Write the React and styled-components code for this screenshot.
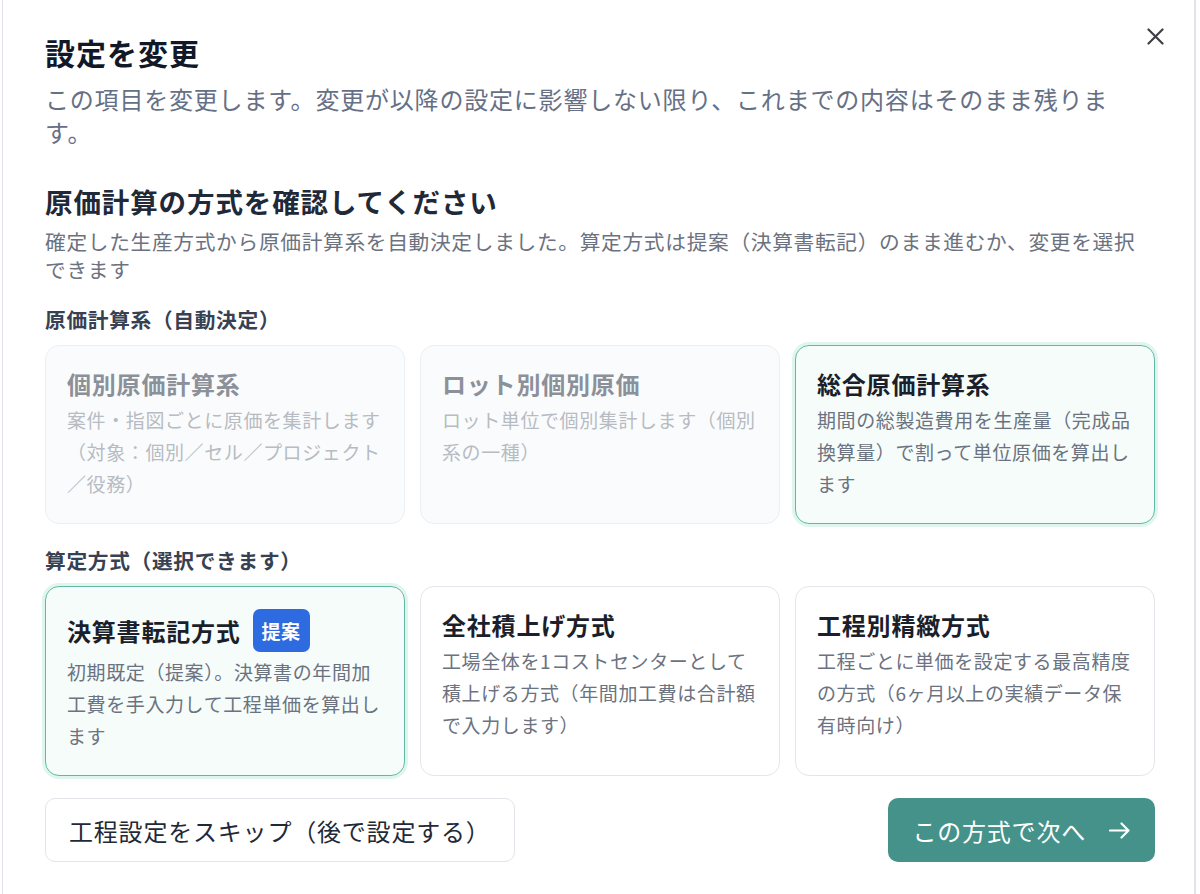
import React from "react";
import styled, { createGlobalStyle, css } from "styled-components";

const GlobalStyle = createGlobalStyle`
  html, body {
    margin: 0;
    background: #ffffff;
  }
  body {
    font-family: "Noto Sans CJK JP", "Noto Sans", "Liberation Sans", sans-serif;
    color: #111827;
  }
  * {
    box-sizing: border-box;
  }
`;

const Panel = styled.div`
  position: relative;
  min-height: 100vh;
  margin: 0 4px 0 2px;
  border-left: 1px solid #e1e3e8;
  border-right: 2px solid #e1e3e8;
  background: #ffffff;
  padding: 33px 39px 40px 42px;
`;

const CloseButton = styled.button`
  position: absolute;
  top: 28px;
  right: 30px;
  width: 17px;
  height: 17px;
  padding: 0;
  border: none;
  background: none;
  cursor: pointer;
  display: flex;
`;

const Title = styled.h1`
  margin: 0;
  font-size: 30px;
  line-height: 39px;
  letter-spacing: 1px;
  font-weight: 700;
  color: #111827;
`;

const Subtitle = styled.p`
  margin: 10px 0 0;
  padding-right: 40px;
  font-size: 24px;
  line-height: 33px;
  letter-spacing: 0.8px;
  color: #667085;
`;

const Heading = styled.h2`
  margin: 35px 0 0;
  font-size: 27.5px;
  line-height: 36px;
  letter-spacing: 0.9px;
  font-weight: 700;
  color: #1f2937;
`;

const Description = styled.p`
  margin: 8px 0 0;
  max-width: 1100px;
  font-size: 20.7px;
  line-height: 28px;
  letter-spacing: 0.7px;
  color: #6b7280;
`;

const Section = styled.section`
  margin-top: ${(p) => p.$top}px;
`;

const Label = styled.div`
  font-size: 20.7px;
  line-height: 28px;
  letter-spacing: 0.7px;
  font-weight: 700;
  color: #374151;
`;

const CardGrid = styled.div`
  margin-top: 12px;
  display: grid;
  grid-template-columns: repeat(3, 1fr);
  gap: 15px;
`;

const cardVariants = {
  disabled: css`
    background: #fafbfd;
    border: 1px solid #eceef2;
  `,
  active: css`
    background: #f5fcfa;
    border: 1px solid #62b9a3;
    box-shadow: 0 0 0 3px rgba(110, 214, 184, 0.22);
  `,
  normal: css`
    background: #ffffff;
    border: 1px solid #e3e5ea;
  `,
};

const Card = styled.div`
  border-radius: 14px;
  padding: 22px 21px 23px;
  ${(p) => cardVariants[p.$variant]}
`;

const CardHead = styled.div`
  display: flex;
  align-items: center;
  gap: 12px;
  min-height: 32px;
  margin-bottom: 4px;
`;

const CardTitle = styled.div`
  font-size: 24px;
  line-height: 32px;
  letter-spacing: 0.8px;
  font-weight: 700;
  color: ${(p) => (p.$muted ? "#8b9099" : "#1a1f2b")};
`;

const CardText = styled.div`
  font-size: 19px;
  line-height: 32px;
  letter-spacing: 0.6px;
  color: ${(p) => (p.$muted ? "#b7bbc2" : "#6b7280")};
`;

const Badge = styled.span`
  display: inline-flex;
  align-items: center;
  height: 43px;
  padding: 0 9px;
  border-radius: 7px;
  background: #2f6be0;
  color: #ffffff;
  font-size: 19px;
  letter-spacing: 0.5px;
  font-weight: 700;
`;

const Footer = styled.div`
  margin-top: 22px;
  display: flex;
  justify-content: space-between;
  align-items: center;
`;

const buttonBase = css`
  height: 64px;
  border-radius: 10px;
  font-family: inherit;
  font-size: 24px;
  font-weight: 400;
  letter-spacing: 0.8px;
  white-space: nowrap;
  display: inline-flex;
  align-items: center;
  cursor: pointer;
`;

const SecondaryButton = styled.button`
  ${buttonBase}
  padding: 0 23px;
  background: #ffffff;
  border: 1px solid #e2e4ea;
  color: #1f2937;
`;

const PrimaryButton = styled.button`
  ${buttonBase}
  padding: 0 25px 0 24px;
  gap: 23px;
  background: #45928a;
  border: none;
  color: #ffffff;
`;

const CloseIcon = () => (
  <svg width="17" height="17" viewBox="0 0 17 17" fill="none">
    <path d="M1.5 1.5L15.5 15.5M15.5 1.5L1.5 15.5" stroke="#3f3f46" strokeWidth="2.2" strokeLinecap="round" />
  </svg>
);

const ArrowIcon = () => (
  <svg width="21" height="17" viewBox="0 0 21 17" fill="none">
    <path d="M1 8.5H19.5M12.5 1.5L19.5 8.5L12.5 15.5" stroke="#ffffff" strokeWidth="2.2" strokeLinecap="round" strokeLinejoin="round" />
  </svg>
);

const systems = [
  {
    title: "個別原価計算系",
    text: "案件・指図ごとに原価を集計します（対象：個別／セル／プロジェクト／役務）",
    variant: "disabled",
  },
  {
    title: "ロット別個別原価",
    text: "ロット単位で個別集計します（個別系の一種）",
    variant: "disabled",
  },
  {
    title: "総合原価計算系",
    text: "期間の総製造費用を生産量（完成品換算量）で割って単位原価を算出します",
    variant: "active",
  },
];

const methods = [
  {
    title: "決算書転記方式",
    text: "初期既定（提案）。決算書の年間加工費を手入力して工程単価を算出します",
    variant: "active",
    badge: "提案",
  },
  {
    title: "全社積上げ方式",
    text: "工場全体を1コストセンターとして積上げる方式（年間加工費は合計額で入力します）",
    variant: "normal",
  },
  {
    title: "工程別精緻方式",
    text: "工程ごとに単価を設定する最高精度の方式（6ヶ月以上の実績データ保有時向け）",
    variant: "normal",
  },
];

const OptionCard = ({ item }) => {
  const muted = item.variant === "disabled";
  return (
    <Card $variant={item.variant}>
      <CardHead>
        <CardTitle $muted={muted}>{item.title}</CardTitle>
        {item.badge ? <Badge>{item.badge}</Badge> : null}
      </CardHead>
      <CardText $muted={muted}>{item.text}</CardText>
    </Card>
  );
};

const App = () => {
  return (
    <>
      <GlobalStyle />
      <Panel>
        <CloseButton aria-label="閉じる">
          <CloseIcon />
        </CloseButton>
        <Title>設定を変更</Title>
        <Subtitle>
          この項目を変更します。変更が以降の設定に影響しない限り、これまでの内容はそのまま残ります。
        </Subtitle>

        <Heading>原価計算の方式を確認してください</Heading>
        <Description>
          確定した生産方式から原価計算系を自動決定しました。算定方式は提案（決算書転記）のまま進むか、変更を選択できます
        </Description>

        <Section $top={22}>
          <Label>原価計算系（自動決定）</Label>
          <CardGrid>
            {systems.map((item) => (
              <OptionCard key={item.title} item={item} />
            ))}
          </CardGrid>
        </Section>

        <Section $top={22}>
          <Label>算定方式（選択できます）</Label>
          <CardGrid>
            {methods.map((item) => (
              <OptionCard key={item.title} item={item} />
            ))}
          </CardGrid>
        </Section>

        <Footer>
          <SecondaryButton>工程設定をスキップ（後で設定する）</SecondaryButton>
          <PrimaryButton>
            この方式で次へ
            <ArrowIcon />
          </PrimaryButton>
        </Footer>
      </Panel>
    </>
  );
};

export default App;
